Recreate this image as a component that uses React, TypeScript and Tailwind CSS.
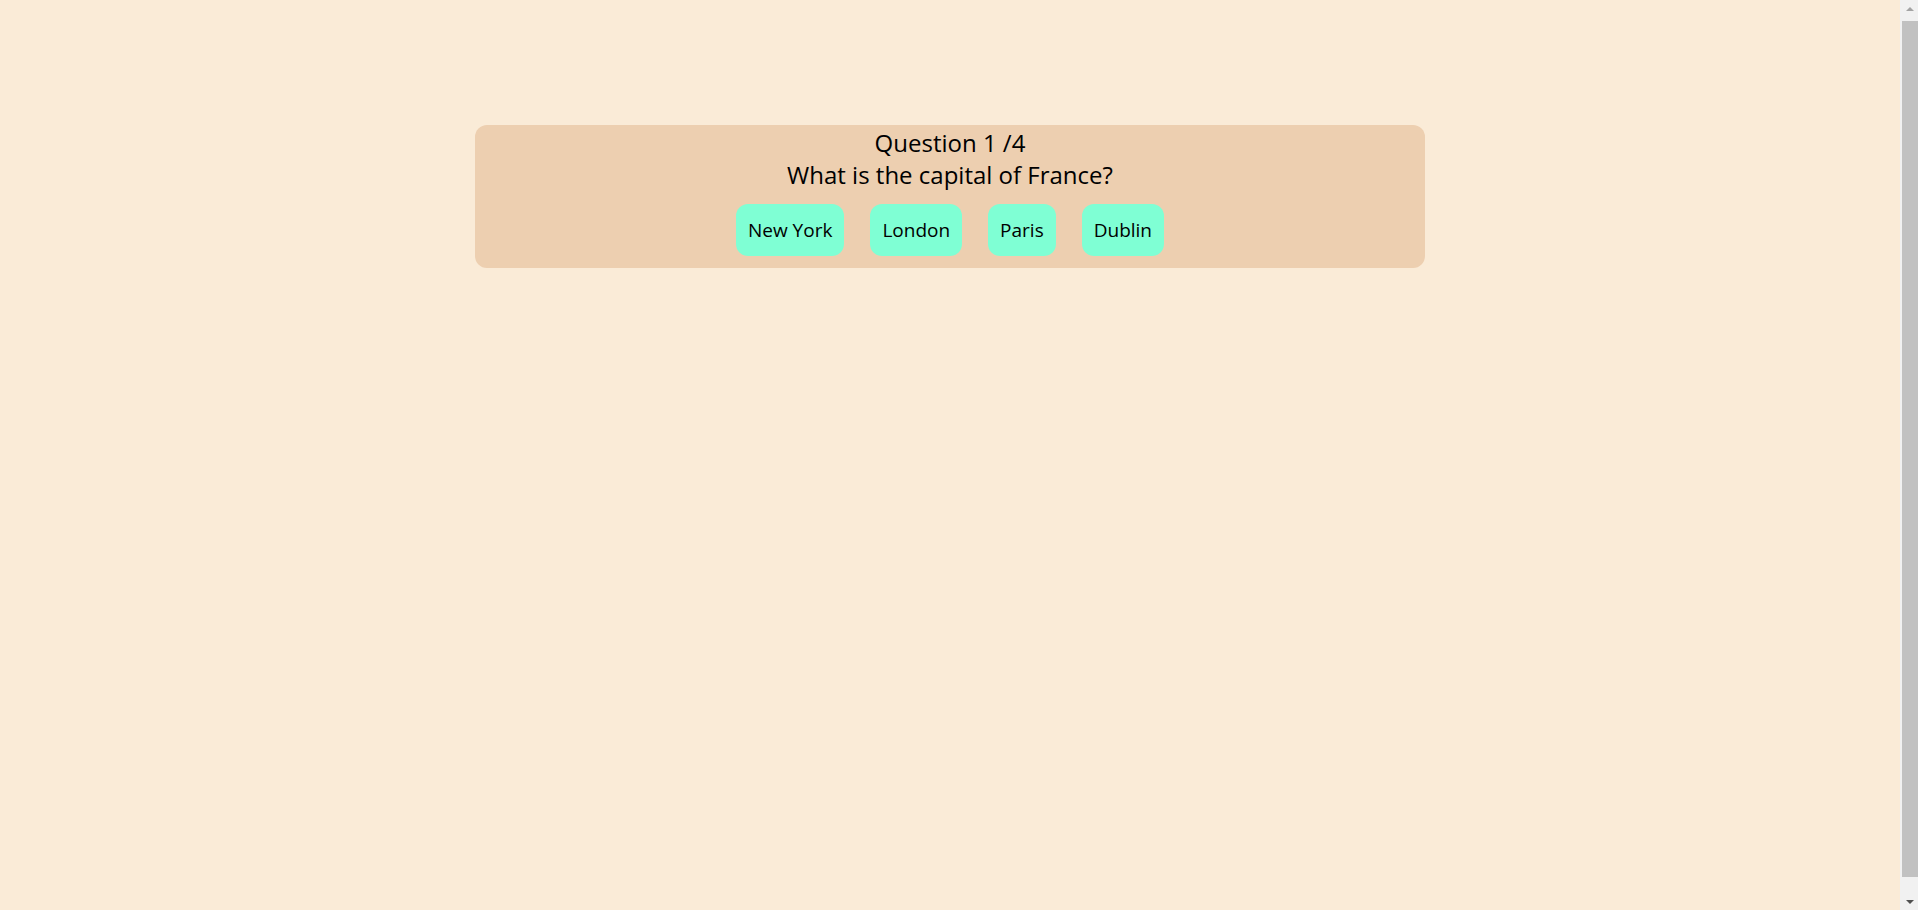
const ANSWERS = ['New York', 'London', 'Paris', 'Dublin']

export default function App() {
  return (
    <div className="flex min-h-[910px] bg-[#faebd7] text-black" style={{ fontFamily: '"Open Sans", "Noto Sans", sans-serif' }}>
      <main className="flex-1 pt-[125px]">
        <div className="mx-auto w-1/2 rounded-xl bg-[#edcfb0] pt-0.5 pb-3 text-center">
          <p className="text-2xl leading-8">Question 1 /4</p>
          <p className="text-2xl leading-8">What is the capital of France?</p>
          <div className="mt-[13px] flex justify-center gap-[26px]">
            {ANSWERS.map(a => (
              <button key={a} className="h-[52px] rounded-xl bg-[#7fffd4] px-3 text-[19px]">
                {a}
              </button>
            ))}
          </div>
        </div>
      </main>

      {/* scrollbar */}
      <div className="flex w-[18px] flex-col bg-[#f1f1f1] pl-[2px]">
        <div className="flex h-[17px] items-center justify-center">
          <div className="h-0 w-0 border-x-[4px] border-b-[4px] border-x-transparent border-b-[#a3a3a3]" />
        </div>
        <div className="mt-1 mb-4 flex-1 bg-[#c1c1c1]" />
        <div className="flex h-[17px] items-center justify-center">
          <div className="h-0 w-0 border-x-[4px] border-t-[4px] border-x-transparent border-t-[#505050]" />
        </div>
      </div>
    </div>
  )
}
